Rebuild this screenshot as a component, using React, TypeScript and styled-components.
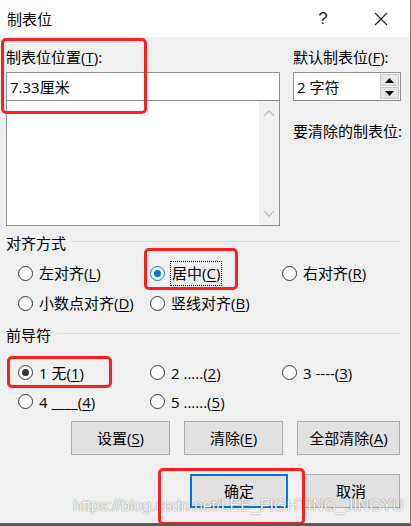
import React from "react";
import styled, { createGlobalStyle } from "styled-components";

const FONT = `"Open Sans", "Noto Sans CJK SC", sans-serif`;

const Global = createGlobalStyle`
  html, body { margin: 0; padding: 0; background: #f0f0f0; }
  body { font-family: ${FONT}; color: #000; }
  * { box-sizing: border-box; }
`;

const Dialog = styled.div`
  position: relative;
  width: 411px;
  height: 526px;
  background: #f0f0f0;
  border-right: 1px solid #7a7a7a;
  border-bottom: 3px solid #5a5a5a;
  display: flex;
  flex-direction: column;
  overflow: hidden;
  font-family: ${FONT};
  font-size: 15px;
`;

const TitleBar = styled.div`
  height: 37px;
  background: #fff;
  display: flex;
  align-items: center;
  padding-left: 7px;
  flex-shrink: 0;
`;

const Title = styled.div`
  flex: 1;
  font-size: 15px;
  line-height: 20px;
`;

const TitleButton = styled.div`
  width: 58px;
  height: 37px;
  display: flex;
  align-items: center;
  justify-content: center;
  font-family: "Liberation Sans", sans-serif;
  font-size: 17px;
  color: #222;
`;

const Body = styled.div`
  display: flex;
  flex-direction: column;
  padding: 10px 9px 0 6px;
`;

const TopGrid = styled.div`
  display: grid;
  grid-template-columns: 274px 108px;
  column-gap: 13px;
`;

const Col = styled.div`
  display: flex;
  flex-direction: column;
`;

const Label = styled.div<{ $mt?: number }>`
  line-height: 20px;
  height: 20px;
  margin-top: ${(p) => p.$mt ?? 0}px;
  margin-bottom: 5px;
  white-space: nowrap;
`;

const U = styled.span`
  text-decoration: underline;
  text-underline-offset: 2px;
`;

const TextBox = styled.div`
  height: 29px;
  background: #fff;
  border: 1px solid #8f8f8f;
  display: flex;
  align-items: center;
  padding-left: 3px;
  position: relative;
  line-height: 20px;
  white-space: pre;
`;

const Spin = styled.div`
  position: absolute;
  right: 1px;
  top: 1px;
  bottom: 1px;
  width: 19px;
  display: grid;
  grid-template-rows: 1fr 1fr;
  gap: 1px;
  background: #fff;
`;

const SpinBtn = styled.div`
  background: #e6e6e6;
  border: 1px solid #c9c9c9;
  display: flex;
  align-items: center;
  justify-content: center;
`;

const ListBox = styled.div`
  height: 126px;
  margin-top: -1px;
  background: #fff;
  border: 1px solid #8f8f8f;
  display: flex;
  justify-content: flex-end;
`;

const ScrollBar = styled.div`
  width: 20px;
  background: #f0f0f0;
  display: flex;
  flex-direction: column;
  justify-content: space-between;
  align-items: center;
  padding: 8px 0 7px;
`;

const GroupHead = styled.div<{ $mt: number }>`
  display: flex;
  align-items: center;
  gap: 6px;
  height: 20px;
  margin-top: ${(p) => p.$mt}px;
  line-height: 20px;
`;

const Rule = styled.div`
  flex: 1;
  height: 1px;
  background: #dcdcdc;
  margin-top: -3px;
`;

const RadioGrid = styled.div<{ $mt: number; $row: number }>`
  display: grid;
  grid-template-columns: 132px 132px 120px;
  grid-auto-rows: ${(p) => p.$row}px;
  padding-left: 12px;
  margin-top: ${(p) => p.$mt}px;
  align-items: center;
`;

const RadioItem = styled.div`
  display: flex;
  align-items: center;
  gap: 6px;
  line-height: 20px;
  height: 20px;
`;

const RadioText = styled.span`
  white-space: pre;
`;

const RadioCircle = styled.span<{ $checked?: "blue" | "dark" }>`
  width: 15px;
  height: 15px;
  border-radius: 50%;
  background: #fff;
  border: 1px solid ${(p) => (p.$checked === "blue" ? "#0078d7" : "#333")};
  display: inline-flex;
  align-items: center;
  justify-content: center;
  flex-shrink: 0;
  &::after {
    content: "";
    display: ${(p) => (p.$checked ? "block" : "none")};
    width: 7px;
    height: 7px;
    border-radius: 50%;
    background: ${(p) => (p.$checked === "blue" ? "#0078d7" : "#333")};
  }
`;

const Focus = styled.span`
  outline: 1px dotted #000;
  outline-offset: 0;
  padding: 1px 1px 2px;
`;

const ButtonRow = styled.div<{ $mt: number }>`
  display: flex;
  justify-content: flex-end;
  gap: 14px;
  margin-top: ${(p) => p.$mt}px;
  padding-right: 1px;
`;

const Button = styled.div<{ $w: number; $default?: boolean }>`
  width: ${(p) => p.$w}px;
  height: 34px;
  background: #e1e1e1;
  border: ${(p) => (p.$default ? "2px solid #0078d7" : "1px solid #adadad")};
  display: flex;
  align-items: center;
  justify-content: center;
  line-height: 20px;
`;

const Highlight = styled.div<{ $x: number; $y: number; $w: number; $h: number }>`
  position: absolute;
  left: ${(p) => p.$x}px;
  top: ${(p) => p.$y}px;
  width: ${(p) => p.$w}px;
  height: ${(p) => p.$h}px;
  border: 3px solid #ff1e1e;
  border-radius: 5px;
  pointer-events: none;
`;

const Watermark = styled.div`
  position: absolute;
  left: 73px;
  top: 495px;
  font-family: "Liberation Sans", Arial, sans-serif;
  font-size: 16px;
  line-height: 22px;
  color: rgba(255, 255, 255, 0.95);
  text-shadow: 0 0 1px rgba(0, 0, 0, 0.45), 0 0 2px rgba(0, 0, 0, 0.2);
  white-space: nowrap;
  pointer-events: none;
`;

const Chevron = ({ up }: { up?: boolean }) => (
  <svg width="12" height="8" viewBox="0 0 12 8">
    <path
      d={up ? "M1 7 L6 2 L11 7" : "M1 1 L6 6 L11 1"}
      fill="none"
      stroke="#c2c2c2"
      strokeWidth="1.6"
    />
  </svg>
);

const Tri = ({ up }: { up?: boolean }) => (
  <svg width="9" height="5" viewBox="0 0 9 5">
    <path d={up ? "M0 5 L4.5 0 L9 5 Z" : "M0 0 L4.5 5 L9 0 Z"} fill="#111" />
  </svg>
);

const Radio = ({
  checked,
  children,
}: {
  checked?: "blue" | "dark";
  children: React.ReactNode;
}) => (
  <RadioItem>
    <RadioCircle $checked={checked} />
    <RadioText>{children}</RadioText>
  </RadioItem>
);

export default function App() {
  return (
    <>
      <Global />
      <Dialog>
        <TitleBar>
          <Title>制表位</Title>
          <TitleButton>?</TitleButton>
          <TitleButton>
            <svg width="14" height="14" viewBox="0 0 14 14">
              <path d="M1 1 L13 13 M13 1 L1 13" stroke="#222" strokeWidth="1.1" />
            </svg>
          </TitleButton>
        </TitleBar>
        <Body>
          <TopGrid>
            <Col>
              <Label>
                制表位位置(<U>T</U>):
              </Label>
              <TextBox>7.33厘米</TextBox>
              <ListBox>
                <ScrollBar>
                  <Chevron up />
                  <Chevron />
                </ScrollBar>
              </ListBox>
            </Col>
            <Col>
              <Label>
                默认制表位(<U>F</U>):
              </Label>
              <TextBox>
                {"2 字符"}
                <Spin>
                  <SpinBtn>
                    <Tri up />
                  </SpinBtn>
                  <SpinBtn>
                    <Tri />
                  </SpinBtn>
                </Spin>
              </TextBox>
              <Label $mt={20}>要清除的制表位:</Label>
            </Col>
          </TopGrid>

          <GroupHead $mt={7}>
            对齐方式
            <Rule />
          </GroupHead>
          <RadioGrid $mt={5} $row={30}>
            <Radio>
              左对齐(<U>L</U>)
            </Radio>
            <Radio checked="blue">
              <Focus>
                居中(<U>C</U>)
              </Focus>
            </Radio>
            <Radio>
              右对齐(<U>R</U>)
            </Radio>
            <Radio>
              小数点对齐(<U>D</U>)
            </Radio>
            <Radio>
              竖线对齐(<U>B</U>)
            </Radio>
          </RadioGrid>

          <GroupHead $mt={7}>
            前导符
            <Rule />
          </GroupHead>
          <RadioGrid $mt={13} $row={29}>
            <Radio checked="dark">
              {"1 无("}<U>1</U>)
            </Radio>
            <Radio>
              {"2 .....("}<U>2</U>)
            </Radio>
            <Radio>
              {"3 ----("}<U>3</U>)
            </Radio>
            <Radio>
              {"4 ____("}<U>4</U>)
            </Radio>
            <Radio>
              {"5 ......("}<U>5</U>)
            </Radio>
          </RadioGrid>

          <ButtonRow $mt={5}>
            <Button $w={99}>
              设置(<U>S</U>)
            </Button>
            <Button $w={99}>
              清除(<U>E</U>)
            </Button>
            <Button $w={103}>
              全部清除(<U>A</U>)
            </Button>
          </ButtonRow>
          <ButtonRow $mt={19}>
            <Button $w={98} $default>
              确定
            </Button>
            <Button $w={98}>取消</Button>
          </ButtonRow>
        </Body>

        <Watermark>https://blog.csdn.net/LEE_FIGHTING_JINGYU</Watermark>
        <Highlight $x={1} $y={38} $w={146} $h={76} />
        <Highlight $x={144} $y={248} $w={94} $h={42} />
        <Highlight $x={7} $y={356} $w={105} $h={32} />
        <Highlight $x={158} $y={468} $w={147} $h={57} />
      </Dialog>
    </>
  );
}
